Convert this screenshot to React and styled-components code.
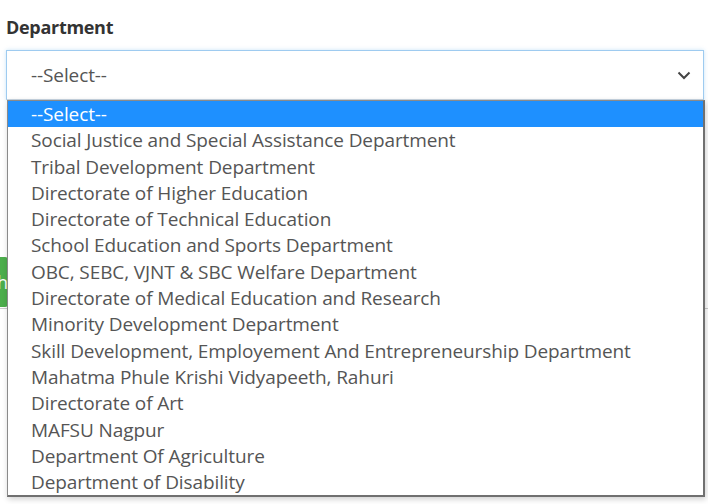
import React from "react"
import styled, { createGlobalStyle } from "styled-components"

const GlobalStyle = createGlobalStyle`
  html, body {
    margin: 0;
    padding: 0;
    background: #fff;
    overflow: hidden;
  }
  body {
    font-family: "Open Sans", "Noto Sans", sans-serif;
  }
`

const departments = [
  "Social Justice and Special Assistance Department",
  "Tribal Development Department",
  "Directorate of Higher Education",
  "Directorate of Technical Education",
  "School Education and Sports Department",
  "OBC, SEBC, VJNT & SBC Welfare Department",
  "Directorate of Medical Education and Research",
  "Minority Development Department",
  "Skill Development, Employement And Entrepreneurship Department",
  "Mahatma Phule Krishi Vidyapeeth, Rahuri",
  "Directorate of Art",
  "MAFSU Nagpur",
  "Department Of Agriculture",
  "Department of Disability",
]

const Page = styled.div`
  width: 708px;
  height: 504px;
  position: relative;
`

const Field = styled.div`
  padding: 14px 4px 0 6px;
`

const Label = styled.label`
  display: block;
  font-size: 18px;
  font-weight: 700;
  color: #333;
  letter-spacing: -0.3px;
  margin-bottom: 10px;
  line-height: 26px;
`

const SelectWrap = styled.div`
  position: relative;
`

const SelectBox = styled.div`
  height: 48px;
  border: 1px solid #9ecbf0;
  border-bottom-color: #c8d6e2;
  box-shadow: 0 0 4px rgba(102, 175, 233, 0.35);
  display: flex;
  align-items: center;
  justify-content: space-between;
  padding: 0 12px 0 24px;
  color: #555;
  font-size: 19px;
  letter-spacing: -0.1px;
`

const Chevron = () => (
  <svg width="14" height="9" viewBox="0 0 14 9">
    <path d="M1.5 1.5 L7 7 L12.5 1.5" fill="none" stroke="#444" strokeWidth="2" />
  </svg>
)

const List = styled.ul`
  position: absolute;
  top: 50px;
  left: 1px;
  right: -1px;
  margin: 0;
  padding: 0;
  list-style: none;
  background: #fff;
  border: 1px solid #8a8a8a;
  border-right: 2px solid #707070;
  border-bottom: 2px solid #707070;
  box-shadow: 1px 2px 6px rgba(0, 0, 0, 0.2);
  z-index: 2;
`

const Option = styled.li`
  height: 26.3px;
  line-height: 27px;
  padding-left: 23px;
  font-size: 19px;
  letter-spacing: -0.1px;
  color: ${p => (p.$active ? "#fff" : "#555")};
  background: ${p => (p.$active ? "#1e90ff" : "transparent")};
  white-space: nowrap;
`

const Below = styled.div`
  margin-top: 157px;
  border-bottom: 1px solid #ccc;
  padding-bottom: 1px;
`

const GreenButton = styled.button`
  display: block;
  height: 50px;
  width: 90px;
  margin-left: -82px;
  padding: 0;
  border: none;
  border-radius: 3px;
  background: #4cae4c;
  color: #fff;
  text-align: right;
  font-family: "Open Sans", sans-serif;
  font-size: 18px;
`

export default function App() {
  return (
    <Page>
      <GlobalStyle />
      <Field>
        <Label>Department</Label>
        <SelectWrap>
          <SelectBox>
            <span>--Select--</span>
            <Chevron />
          </SelectBox>
          <List>
            <Option $active>--Select--</Option>
            {departments.map(d => (
              <Option key={d}>{d}</Option>
            ))}
          </List>
        </SelectWrap>
      </Field>
      <Below>
        <GreenButton>Search</GreenButton>
      </Below>
    </Page>
  )
}
